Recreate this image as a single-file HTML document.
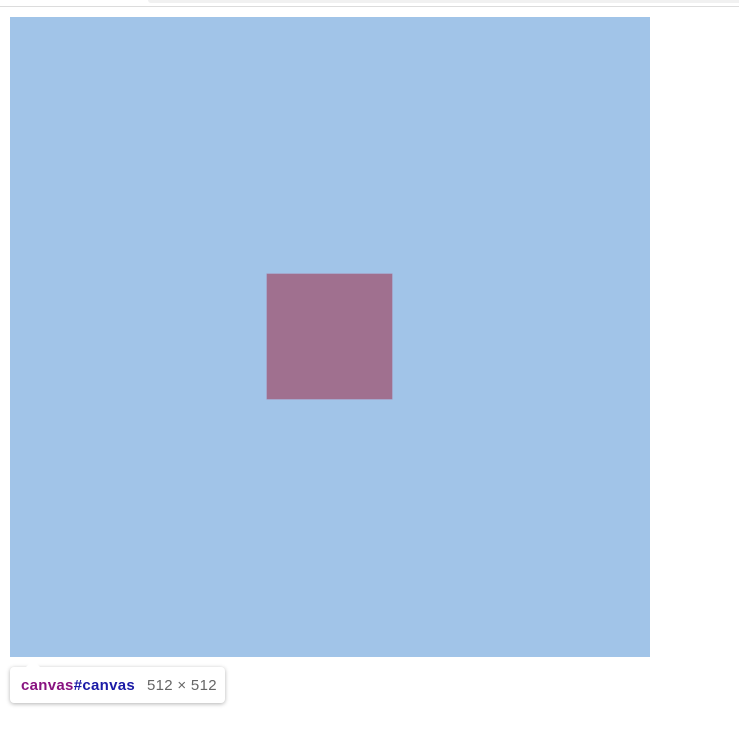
<!DOCTYPE html>
<html><head><meta charset="utf-8"><style>
html,body{margin:0;padding:0;width:739px;height:743px;background:#fff;overflow:hidden;position:relative;font-family:"Liberation Sans",sans-serif}
.line{position:absolute;left:0;top:6px;width:739px;height:1px;background:#dcdcdc}
.bar{position:absolute;left:148px;top:0;width:591px;height:3px;background:#f1f1f1;border-radius:0 0 0 4px}
.cv{position:absolute;left:10px;top:17px;width:640px;height:640px;background:#a1c4e8}
.sq{position:absolute;left:267px;top:274px;width:125px;height:125px;background:#a0708f;box-shadow:0 0 0 0.5px #a68ab0}
.tip{position:absolute;left:10px;top:667px;width:215px;height:36px;background:#fff;border-radius:4px;box-shadow:0 1px 4px rgba(0,0,0,.3);font-size:15px;line-height:38px}
.arr{position:absolute;left:26px;top:660px;width:0;height:0;border-left:7px solid transparent;border-right:7px solid transparent;border-bottom:7px solid #fff;z-index:2}
.t{position:absolute;left:11px;top:0;white-space:nowrap;letter-spacing:0.3px}
.a{color:#881280;font-weight:bold}.b{color:#1a1aa6;font-weight:bold}.c{color:#666;margin-left:12px}
</style></head><body>
<div class="bar"></div><div class="line"></div>
<div class="cv"></div><div class="sq"></div>
<div class="arr"></div>
<div class="tip"><span class="t"><span class="a">canvas</span><span class="b">#canvas</span><span class="c">512 × 512</span></span></div>
</body></html>
